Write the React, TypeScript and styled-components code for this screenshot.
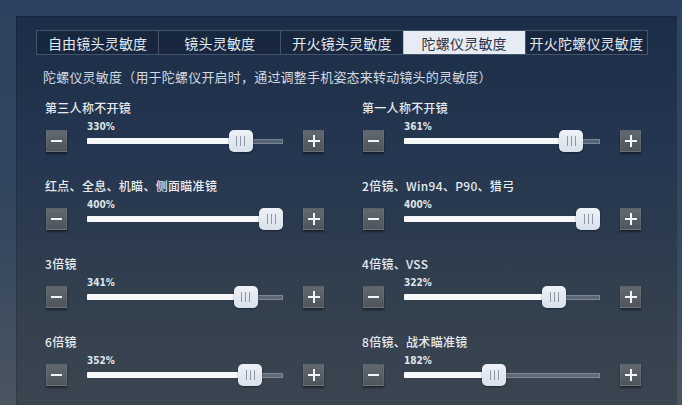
import React from "react";
import styled, { createGlobalStyle } from "styled-components";

const GlobalStyle = createGlobalStyle`
  html, body {
    margin: 0;
    padding: 0;
    width: 682px;
    height: 405px;
    overflow: hidden;
    background: #2b3d59;
  }
  * {
    box-sizing: border-box;
  }
`;

const tabs = [
  "自由镜头灵敏度",
  "镜头灵敏度",
  "开火镜头灵敏度",
  "陀螺仪灵敏度",
  "开火陀螺仪灵敏度",
];

const settings = [
  { label: "第三人称不开镜", value: 330 },
  { label: "第一人称不开镜", value: 361 },
  { label: "红点、全息、机瞄、侧面瞄准镜", value: 400 },
  { label: "2倍镜、Win94、P90、猎弓", value: 400 },
  { label: "3倍镜", value: 341 },
  { label: "4倍镜、VSS", value: 322 },
  { label: "6倍镜", value: 352 },
  { label: "8倍镜、战术瞄准镜", value: 182 },
];

const MAX = 400;
const TRACK = 196;
const THUMB = 24;

const App = () => {
  return (
    <Page>
      <GlobalStyle />
      <Panel>
        <TabBar>
          {tabs.map((t, i) => (
            <Tab key={t} active={i === 3}>
              {t}
            </Tab>
          ))}
        </TabBar>
        <Subtitle>
          陀螺仪灵敏度（用于陀螺仪开启时，通过调整手机姿态来转动镜头的灵敏度）
        </Subtitle>
        <Grid>
          {settings.map((s) => {
            // thumb centre along the track, value range 0-400%
            const pos = THUMB / 2 + (s.value / MAX) * (TRACK - THUMB);
            return (
              <Setting key={s.label}>
                <Label>{s.label}</Label>
                <SliderRow>
                  <StepButton aria-label="minus">
                    <MinusMark />
                  </StepButton>
                  <TrackColumn>
                    <Percent>{s.value}%</Percent>
                    <TrackWrap>
                      <Rail />
                      <Fill style={{ width: pos }} />
                      <Thumb style={{ left: pos - THUMB / 2 }}>
                        <Grip />
                        <Grip />
                        <Grip />
                      </Thumb>
                    </TrackWrap>
                  </TrackColumn>
                  <StepButton aria-label="plus">
                    <PlusMark />
                  </StepButton>
                </SliderRow>
              </Setting>
            );
          })}
        </Grid>
      </Panel>
    </Page>
  );
};

export default App;

const Page = styled.div`
  width: 682px;
  height: 405px;
  padding: 16px 5px 0 16px;
  background: linear-gradient(180deg, #2c4260 0%, #34475e 55%, #4a5561 100%);
  font-family: "Noto Sans CJK SC", "Noto Sans", sans-serif;
`;

const Panel = styled.div`
  width: 661px;
  height: 389px;
  display: flex;
  flex-direction: column;
  padding: 14px 0 0 20px;
  background: linear-gradient(180deg, #1c2d47 0%, #243650 35%, #313f4e 70%, #3b4550 100%);
  box-shadow: inset 1px 1px 0 rgba(0, 0, 0, 0.15);
`;

const TabBar = styled.div`
  display: flex;
  width: 612px;
  height: 25px;
  border: 1px solid rgba(120, 140, 165, 0.45);
  background: rgba(18, 32, 52, 0.45);
`;

const Tab = styled.div<{ active?: boolean }>`
  flex: 1;
  display: flex;
  align-items: center;
  justify-content: center;
  font-size: 14px;
  letter-spacing: 0.2px;
  color: ${(p) => (p.active ? "#2a3447" : "#e4e9ef")};
  background: ${(p) => (p.active ? "#e7ecf4" : "transparent")};
  border-left: 1px solid rgba(120, 140, 165, 0.45);
  &:first-child {
    border-left: none;
  }
`;

const Subtitle = styled.div`
  margin: 13px 0 0 7px;
  font-size: 13px;
  line-height: 18px;
  letter-spacing: 0.2px;
  color: #d3d9e0;
`;

const Grid = styled.div`
  display: grid;
  grid-template-columns: 317px 317px;
  row-gap: 26px;
  margin: 14px 0 0 9px;
`;

const Setting = styled.div`
  display: flex;
  flex-direction: column;
`;

const Label = styled.div`
  font-size: 12px;
  line-height: 16px;
  font-weight: 500;
  letter-spacing: 0.3px;
  color: #e6eaef;
`;

const SliderRow = styled.div`
  display: flex;
  align-items: flex-end;
  gap: 20px;
  margin-top: 5px;
  padding-left: 1px;
`;

const StepButton = styled.div`
  width: 21px;
  height: 22px;
  background: linear-gradient(180deg, #62686f 0%, #4f555c 100%);
  border: 1px solid rgba(255, 255, 255, 0.07);
  box-shadow: 0 2px 2px rgba(0, 0, 0, 0.45);
  display: flex;
  align-items: center;
  justify-content: center;
`;

const MinusMark = styled.span`
  width: 11px;
  height: 2px;
  background: #f2f4f6;
`;

const PlusMark = styled.span`
  position: relative;
  width: 12px;
  height: 12px;
  &::before,
  &::after {
    content: "";
    position: absolute;
    background: #f2f4f6;
  }
  &::before {
    left: 0;
    top: 5px;
    width: 12px;
    height: 2px;
  }
  &::after {
    left: 5px;
    top: 0;
    width: 2px;
    height: 12px;
  }
`;

const TrackColumn = styled.div`
  width: ${TRACK}px;
  display: flex;
  flex-direction: column;
`;

const Percent = styled.div`
  font-family: "DejaVu Sans Condensed", "DejaVu Sans", sans-serif;
  font-weight: bold;
  font-size: 10px;
  line-height: 12px;
  color: #dfe4ea;
  margin-bottom: -3px;
`;

const TrackWrap = styled.div`
  position: relative;
  height: 22px;
`;

const Rail = styled.div`
  position: absolute;
  left: 0;
  right: 0;
  top: 9px;
  height: 5px;
  background: rgba(125, 137, 150, 0.55);
  border: 1px solid rgba(175, 185, 195, 0.4);
`;

const Fill = styled.div`
  position: absolute;
  left: 0;
  top: 8px;
  height: 6px;
  background: #f7f8fa;
  border-radius: 1px;
`;

const Thumb = styled.div`
  position: absolute;
  top: 0;
  width: ${THUMB}px;
  height: 22px;
  border-radius: 5px;
  background: linear-gradient(180deg, #eef2f8 0%, #d8e0ea 100%);
  box-shadow: 0 1px 2px rgba(0, 0, 0, 0.4);
  display: flex;
  align-items: center;
  justify-content: center;
  gap: 3px;
`;

const Grip = styled.span`
  width: 1px;
  height: 10px;
  background: #8e99a8;
`;
